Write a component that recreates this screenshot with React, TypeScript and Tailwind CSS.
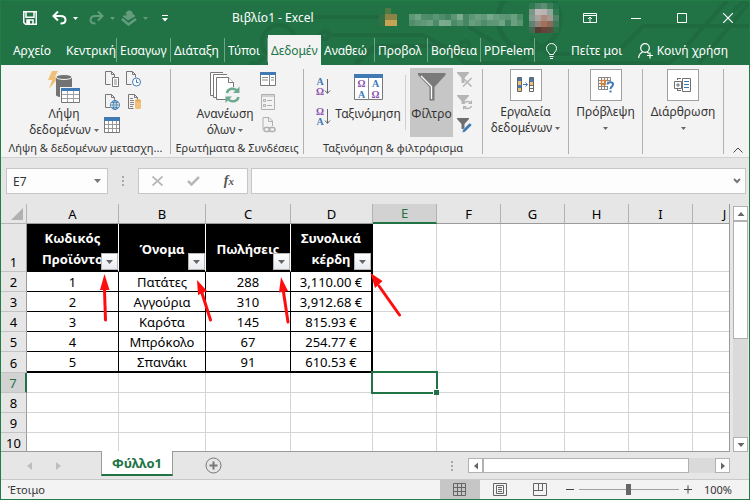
import { useState } from 'react';
import type { ReactNode } from 'react';
import clsx from 'clsx';

type Row = { id: string; name: string; sales: string; profit: string };

const tabs = [
  { label: 'Κεντρική', width: 'w-[54px]' },
  { label: 'Εισαγωγ', width: 'w-[54px]' },
  { label: 'Διάταξη', width: 'w-[54px]' },
  { label: 'Τύποι', width: 'w-[43px]' },
  { label: 'Δεδομέν', width: 'w-[53px]' },
  { label: 'Αναθεώ', width: 'w-[54px]' },
  { label: 'Προβολ', width: 'w-[53px]' },
  { label: 'Βοήθεια', width: 'w-[53px]' },
  { label: 'PDFelem', width: 'w-[54px]' },
];

const columns = [
  { name: 'A', width: 'w-[92px]' },
  { name: 'B', width: 'w-[87px]' },
  { name: 'C', width: 'w-[85px]' },
  { name: 'D', width: 'w-[82px]' },
  { name: 'E', width: 'w-[64px]' },
  { name: 'F', width: 'w-[64px]' },
  { name: 'G', width: 'w-[64px]' },
  { name: 'H', width: 'w-[64px]' },
  { name: 'I', width: 'w-[64px]' },
  { name: 'J', width: 'w-[64px]' },
];

const headings = [
  ['Κωδικός', 'Προϊόντο'],
  ['Όνομα'],
  ['Πωλήσεις'],
  ['Συνολικά', 'κέρδη'],
];

const rows: Row[] = [
  { id: '1', name: 'Πατάτες', sales: '288', profit: '3,110.00 €' },
  { id: '2', name: 'Αγγούρια', sales: '310', profit: '3,912.68 €' },
  { id: '3', name: 'Καρότα', sales: '145', profit: '815.93 €' },
  { id: '4', name: 'Μπρόκολο', sales: '67', profit: '254.77 €' },
  { id: '5', name: 'Σπανάκι', sales: '91', profit: '610.53 €' },
];

const emptyCols = ['E', 'F', 'G', 'H', 'I', 'J'];
const emptyRows = [7, 8, 9, 10];

function Caret({ className = 'text-[#666]' }: { className?: string }) {
  return (
    <svg width="5" height="3" viewBox="0 0 5 3" className={clsx('shrink-0', className)} fill="currentColor">
      <path d="M0 0h5L2.5 3z" />
    </svg>
  );
}

/* ---------- title bar ---------- */

function Circuit() {
  return (
    <svg className="absolute right-0 top-0 pointer-events-none" width="500" height="64" viewBox="0 0 500 64" fill="none" stroke="#1f6a41" strokeWidth="4">
      <circle cx="30" cy="41" r="17" />
      <path d="M20 36h18M46 16h90M0 62h8l8-6M108 62l14-12h22" />
      <circle cx="76" cy="34" r="4" />
      <path d="M80 34h94l28 16h8M106 62l20-17h70l20 17h34" />
      <circle cx="216" cy="44" r="4" />
      <path d="M220 26l30 18M162 16h60" />
      <circle cx="280" cy="18" r="31" strokeWidth="5" />
      <path d="M250 62h22l6-6" />
      <path d="M500 25h-106l-28 28h-66l-18-16M500 2l-50 60M478 0l-50 55-8 7h-170M484 10l16-14" />
    </svg>
  );
}

function BlurredUser() {
  const bar = ['#5e9877', '#6fa386', '#508e6b', '#4b8b67', '#5a9574', '#4f8c6b', '#438460', '#5a9574', '#7cab8f', '#468762', '#5c9675', '#6aa080', '#5f9979', '#79a98c', '#679e7e', '#5e9877', '#5b9574', '#6aa080', '#4c8b68'];
  const face = [
    '#2f7b51', '#4f8568', '#5d8f75', '#3c7f5a', '#23744a',
    '#7b9686', '#bdb9b8', '#b9b3b1', '#8fa79a', '#2f7b51',
    '#7f9c8c', '#aaa1a1', '#b08a78', '#a39a92', '#4f8568',
    '#5d8470', '#94827e', '#a5705a', '#8a6a58', '#3f7a58',
    '#3f6b52', '#563c35', '#644339', '#5c4a40', '#2c7048',
  ];
  return (
    <svg width="182" height="32" viewBox="0 0 182 32" shapeRendering="crispEdges" aria-hidden="true">
      <path d="M7 6h6v6H7z" fill="#4f7a45" />
      <path d="M1 12h6v12H1z" fill="#326f42" />
      <path d="M7 12h12v6H7z" fill="#8c8447" />
      <path d="M7 18h12v6H7z" fill="#c5a455" />
      {bar.map((c, i) => (
        <g key={i}>
          <rect x={31 + i * 6} y="12" width="6" height="6" fill={c} />
          <rect x={31 + i * 6} y="18" width="6" height="6" fill={bar[(i * 5 + 2) % bar.length]} />
        </g>
      ))}
      {face.map((c, i) => (
        <rect key={i} x={151 + (i % 5) * 6} y={1 + Math.floor(i / 5) * 6} width="6" height="6" fill={c} />
      ))}
    </svg>
  );
}

function TitleBar() {
  return (
    <header className="relative flex h-[34px] items-center text-white">
      <div className="flex w-[231px] items-center pl-[22px]">
        <button aria-label="Αποθήκευση">
          <svg width="14" height="14" viewBox="0 0 14 14" fill="none" stroke="#fff" strokeWidth="1.5">
            <path d="M.75.75h12.5v12.5H2.5L.75 11.5z" />
            <path d="M3 1v5.2h8V1M4 13V9h6v4" />
            <path d="M4 9h3v4H4z" fill="#fff" stroke="none" />
          </svg>
        </button>
        <button aria-label="Αναίρεση" className="ml-[15px] flex items-center gap-[6px]">
          <svg width="15" height="14" viewBox="0 0 15 14" fill="none" stroke="#fff" strokeWidth="2">
            <path d="M6 .5L1.500 5 6 9.500M2 5h6.500c3 0 5 1.500 5 4S12 12.500 8.500 12.500" />
          </svg>
          <Caret className="text-white" />
        </button>
        <button aria-label="Επανάληψη" className="ml-[11px] flex items-center gap-[6px] opacity-30">
          <svg width="15" height="14" viewBox="0 0 15 14" fill="none" stroke="#fff" strokeWidth="2">
            <path d="M9 .5L13.500 5 9 9.500M13 5H6.500c-3 0-5 1.500-5 4S3 12.500 6.500 12.500" />
          </svg>
          <Caret className="text-white" />
        </button>
        <button aria-label="Λειτουργία αφής" className="ml-[6px] flex items-center gap-[6px] opacity-30">
          <svg width="16" height="16" viewBox="0 0 16 16" fill="none" stroke="#fff">
            <path d="M2 6l5 4 7-4-3-2v-2l-3-1-2 2v3z" fill="#fff" />
            <path d="M1 9l6.500 5.500L15 9" strokeWidth="2.500" />
            <path d="M5 4c0-4 6-4 6 0" />
          </svg>
          <Caret className="text-white" />
        </button>
        <button aria-label="Προσαρμογή" className="ml-[14px]">
          <svg width="6" height="7" viewBox="0 0 6 7" fill="#fff">
            <path d="M0 0h6v1H0zM0 3h6L3 6.500z" />
          </svg>
        </button>
      </div>
      <h1 className="whitespace-nowrap text-xs">Βιβλίο1 - Excel</h1>
      <div className="ml-auto flex items-center">
        <BlurredUser />
        <button aria-label="Επιλογές κορδέλας" className="ml-[23px]">
          <svg width="14" height="10" viewBox="0 0 14 10" fill="none" stroke="#fff">
            <path d="M.5.5h13v9H.5zM.5 2.500h13M7 9V4.500M5 6l2-2 2 2" />
          </svg>
        </button>
        <button aria-label="Ελαχιστοποίηση" className="ml-[34px]">
          <svg width="10" height="10" viewBox="0 0 10 10" stroke="#fff"><path d="M0 5.500h10" /></svg>
        </button>
        <button aria-label="Μεγιστοποίηση" className="ml-[36px]">
          <svg width="10" height="10" viewBox="0 0 10 10" fill="none" stroke="#fff"><path d="M.5.5h9v9h-9z" /></svg>
        </button>
        <button aria-label="Κλείσιμο" className="ml-[36px] mr-4">
          <svg width="10" height="10" viewBox="0 0 10 10" stroke="#fff" strokeWidth="1.200"><path d="M0 0l10 10M10 0L0 10" /></svg>
        </button>
      </div>
    </header>
  );
}

function TabBar() {
  const [active, setActive] = useState('Δεδομέν');
  return (
    <nav className="relative flex h-[30px] items-stretch text-xs text-white">
      <button className="w-[62px] pt-px text-center">Αρχείο</button>
      {tabs.map((t) => (
        <button
          key={t.label}
          onClick={() => setActive(t.label)}
          className={clsx('flex shrink-0 items-center', t.width, t.label === active && 'bg-[#f3f3f3] text-[#217346]')}
        >
          <span
            className={clsx(
              'flex h-6 w-full items-center border-r pl-[3px] pt-px',
              t.label === active ? 'border-transparent' : 'border-[#6fa587]',
            )}
          >
            <span className="overflow-hidden whitespace-nowrap">{t.label}</span>
          </span>
        </button>
      ))}
      <button className="ml-[11px] flex items-center gap-[14px] whitespace-nowrap pt-px">
        <svg width="11" height="16" viewBox="0 0 11 16" fill="none" stroke="#fff">
          <path d="M3.500 11.500c0-2-3-3-3-6a5 5 0 0110 0c0 3-3 4-3 6zM3.500 13.500h4M4 15.500h3" />
        </svg>
        Πείτε μοι
      </button>
      <button className="ml-auto mr-[21px] flex items-center gap-[3px] whitespace-nowrap pt-px">
        <svg width="16" height="16" viewBox="0 0 16 16" fill="none" stroke="#fff" strokeWidth="1.200">
          <circle cx="7" cy="5" r="4.300" />
          <path d="M.6 15c.3-3 1.800-5 4-6M9 9l2 1.500M12 9.500v6M9 12.500h6" />
        </svg>
        Κοινή χρήση
      </button>
    </nav>
  );
}

/* ---------- ribbon icons ---------- */

function Small({ children, label }: { children: ReactNode; label: string }) {
  return (
    <button aria-label={label} className="block">
      <svg width="16" height="16" viewBox="0 0 16 16" fill="none">{children}</svg>
    </button>
  );
}

const page = <path d="M1.500.5h6l3 3v3M7.500.5v3h3M1.500.5v13h5" stroke="#777" fill="none" />;

function GetDataIcon() {
  return (
    <svg width="32" height="32" viewBox="0 0 32 32">
      <path d="M4 0h6L7 6h4L1 18l3-9H0z" fill="#eec07a" />
      <path d="M8 7v17c0 3 16 3 16 0V7z" fill="#737373" />
      <ellipse cx="16" cy="6" rx="8" ry="2.500" fill="#737373" stroke="#f3f3f3" />
      <path d="M12 16h20v16H12z" fill="#f3f3f3" />
      <path d="M13.500 17.500h18v14h-18z" fill="#fff" stroke="#777" />
      <path d="M13 17h19v3H13z" fill="#4179b5" />
      <path d="M19.500 20v11M25.500 20v11M14 23.500h17M14 27.500h17" stroke="#a0a0a0" />
    </svg>
  );
}

function RefreshAllIcon() {
  return (
    <svg width="32" height="32" viewBox="0 0 32 32" fill="#fff" stroke="#777">
      <path d="M14 1.500H1.500v23H4M18 3.500H4.500v23H7" />
      <path d="M7.500 6.500h12l5 5v17h-17z" />
      <path d="M19.500 6.500v5h5" />
      <circle cx="23.500" cy="24" r="8" fill="#f3f3f3" stroke="none" />
      <path d="M18 22c1-4.500 7-6 10.500-2M29.500 26c-1 4.500-7 6-10.500 2" fill="none" stroke="#6fab90" strokeWidth="2.500" />
      <path d="M30.500 15.500v6.500h-6.500zM16.500 32v-6.500H23z" fill="#6fab90" stroke="none" />
    </svg>
  );
}

function SortIcon() {
  return (
    <svg width="29" height="26" viewBox="0 0 29 26" fontFamily="Liberation Serif, serif" fontSize="10" fontWeight="bold" textAnchor="middle">
      <path d="M.5.5h28v25H.5z" fill="#fff" stroke="#777" />
      <path d="M0 0h29v4H0z" fill="#4179b5" />
      <path d="M14.500 4v22" stroke="#888" />
      <text x="7.500" y="13" fill="#8a4fb0">Ω</text>
      <text x="21.500" y="13" fill="#4179b5">Α</text>
      <text x="7.500" y="24" fill="#4179b5">Α</text>
      <text x="21.500" y="24" fill="#8a4fb0">Ω</text>
    </svg>
  );
}

function SortOrder({ desc = false }: { desc?: boolean }) {
  return (
    <button aria-label={desc ? 'Φθίνουσα ταξινόμηση' : 'Αύξουσα ταξινόμηση'} className="block">
      <svg width="15" height="18" viewBox="0 0 15 18" fontFamily="Liberation Serif, serif" fontSize="10" fontWeight="bold" textAnchor="middle">
        <text x="4" y="7" fill={desc ? '#8a4fb0' : '#4179b5'}>{desc ? 'Ω' : 'Α'}</text>
        <text x="4" y="17" fill={desc ? '#4179b5' : '#8a4fb0'}>{desc ? 'Α' : 'Ω'}</text>
        <path d="M11.500 1v14M9 12.500l2.500 3 2.500-3" fill="none" stroke="#666" />
      </svg>
    </button>
  );
}

function FilterIcon() {
  return (
    <svg width="28" height="28" viewBox="0 0 28 28">
      <path d="M0 0h27.500v2L16.500 14v13.500h-5V14L0 2z" fill="#7a7a7a" />
      <path d="M3 3l10.500 10.500v12.500" fill="none" stroke="#fff" strokeWidth="1.300" />
    </svg>
  );
}

function ToolsIcon() {
  return (
    <svg width="18" height="16" viewBox="0 0 18 16">
      <path d="M.5.5h4v14h-4z" fill="#eec07a" stroke="#666" />
      <path d="M1 1h3v3H1zM1 8h3v3H1z" fill="#4179b5" />
      <path d="M6 7.500h4.500M8.500 5.500l2 2-2 2" stroke="#4179b5" fill="none" />
      <path d="M12.500.5h4v14h-4z" fill="#fff" stroke="#666" />
      <path d="M13 1h3v4h-3z" fill="#4179b5" />
      <path d="M13 5h3v3h-3z" fill="#eec07a" />
      <path d="M12 8.500h5M12 11.500h5" stroke="#666" />
    </svg>
  );
}

function ForecastIcon() {
  return (
    <svg width="18" height="16" viewBox="0 0 18 16" fill="none">
      <path d="M1.500.5h12v12h-12zM4.500.5v12M7.500.5v12M10.500.5v12M1.500 3.500h12M1.500 6.500h12M1.500 9.500h12" stroke="#888" />
      <path d="M4.500 3.500h4v4h-4z" stroke="#e0802f" strokeWidth="1.500" />
      <path d="M9 4.500h8V16h-6V9H9z" fill="#fff" />
      <path d="M10.500 7.500c.3-3 5.500-3 5.500 0 0 2-2.500 2-2.500 4.500" stroke="#4179b5" strokeWidth="2" />
      <path d="M12.500 13.500h2v2h-2z" fill="#4179b5" />
    </svg>
  );
}

function OutlineIcon() {
  return (
    <svg width="18" height="16" viewBox="0 0 18 16" fill="none" stroke="#707070">
      <path d="M3 1.500h4M3 13.500h4M3.500 1v2M3.500 12v2" />
      <path d="M.5 4.500h7v7h-7zM2 8h4M4 6v4" />
      <path d="M8.500 1.500h8v13h-8z" />
      <path d="M10 4.500h5M10 7.500h5M10 10.500h5" stroke="#4179b5" />
    </svg>
  );
}

/* ---------- ribbon ---------- */

function Group({ children, label, className }: { children: ReactNode; label?: string; className: string }) {
  return (
    <section className={clsx('flex h-[85px] shrink-0 flex-col border-r border-[#b1b1b1]', className)}>
      <div className="flex h-[74px] items-start">{children}</div>
      {label && <p className="whitespace-nowrap text-center text-[11px] leading-3">{label}</p>}
    </section>
  );
}

function Boxed({ children, lines }: { children: ReactNode; lines: string[] }) {
  return (
    <button className="flex w-full flex-col items-center leading-4">
      <span className="mb-[3px] flex h-8 w-8 items-center justify-center border border-[#a0a0a0] bg-white">{children}</span>
      {lines[0]}
      <span className="flex h-4 items-center gap-[3px]">
        {lines[1]}
        <Caret />
      </span>
    </button>
  );
}

function Ribbon() {
  return (
    <div className="flex h-[93px] border-b border-[#d0d0d0] bg-[#f3f3f3] pt-1 text-xs text-[#333]">
      <Group label="Λήψη & δεδομένων μετασχη..." className="w-[170px]">
        <button className="ml-[27px] mt-[2px] flex w-[72px] flex-col items-center leading-4">
          <span className="mb-[3px]"><GetDataIcon /></span>
          Λήψη
          <span className="flex items-center gap-[3px] whitespace-nowrap">δεδομένων <Caret /></span>
        </button>
        <div className="ml-1 mt-[2px] grid grid-cols-2 gap-x-[5px] gap-y-[7px]">
          <Small label="Από κείμενο">
            {page}
            <path d="M8.500 6.500h6v9h-6z" fill="#fff" stroke="#777" />
            <path d="M10 9h3M10 11h3M10 13h3" stroke="#888" />
          </Small>
          <Small label="Πρόσφατες προελεύσεις">
            {page}
            <circle cx="11.500" cy="11" r="4" fill="#fff" stroke="#4179b5" />
            <path d="M11.500 8.500v3h2" stroke="#4179b5" />
          </Small>
          <Small label="Από το web">
            {page}
            <circle cx="11" cy="11" r="4.500" fill="#fff" stroke="#4179b5" />
            <path d="M6.500 11h9M11 6.500v9M8 8.500h6M8 13.500h6" stroke="#6f9fb0" />
            <ellipse cx="11" cy="11" rx="2" ry="4.500" stroke="#4179b5" />
          </Small>
          <Small label="Υπάρχουσες συνδέσεις">
            <path d="M3.500.5h6l3 3v2M9.500.5v3h3M3.500.5v14h5" stroke="#777" />
            <path d="M5 4.500h3M5 6.500h4M5 8.500h4M5 10.500h4M5 12.500h3" stroke="#888" />
            <path d="M10 7v7c0 1.500 6 1.500 6 0V7z" fill="#eec07a" />
            <ellipse cx="13" cy="6.500" rx="3" ry="1.300" fill="#e3ab55" />
          </Small>
          <Small label="Από πίνακα">
            <path d="M.5.5h15v15H.5z" fill="#fff" stroke="#777" />
            <path d="M0 0h16v4H0z" fill="#4179b5" />
            <path d="M4.500 4v11M8.500 4v11M12.500 4v11M1 7.500h14M1 11.500h14" stroke="#999" />
          </Small>
        </div>
      </Group>

      <Group label="Ερωτήματα & Συνδέσεις" className="w-[133px]">
        <button className="ml-[22px] mt-[2px] flex w-[64px] flex-col items-center leading-4">
          <span className="mb-[3px]"><RefreshAllIcon /></span>
          Ανανέωση
          <span className="flex items-center gap-[3px]">όλων <Caret /></span>
        </button>
        <div className="ml-[3px] mt-[2px] flex flex-col gap-[7px]">
          <Small label="Ερωτήματα">
            <path d="M.5 1.500h15v13H.5z" fill="#fff" stroke="#777" />
            <path d="M0 1h16v3H0z" fill="#4179b5" />
            <path d="M9.500 4v10M2 6.500h6M2 9h6M11 6.500h3M11 9h3" stroke="#888" />
          </Small>
          <Small label="Ιδιότητες">
            <path d="M1.500.5h13v15h-13z" stroke="#b0b0b0" />
            <path d="M1 2h14M7 6.500h5M7 11.500h5" stroke="#b0b0b0" />
            <path d="M3.500 5.500h2v2h-2zM3.500 10.500h2v2h-2z" stroke="#b0b0b0" />
          </Small>
          <Small label="Επεξεργασία συνδέσεων">
            <path d="M3 12.500V.5h6l3.500 3.500v5M8.500.5v4h4" stroke="#b0b0b0" />
            <rect x="4" y="10.500" width="6" height="4" rx="2" stroke="#b0b0b0" strokeWidth="1.500" />
            <rect x="9" y="10.500" width="6" height="4" rx="2" stroke="#b0b0b0" strokeWidth="1.500" />
          </Small>
        </div>
      </Group>

      <Group label="Ταξινόμηση & φιλτράρισμα" className="w-[179px]">
        <div className="ml-[12px] mt-[9px] flex flex-col gap-3">
          <SortOrder />
          <SortOrder desc />
        </div>
        <button className="ml-[4px] mt-[5px] flex w-[66px] flex-col items-center leading-4">
          <span className="mb-[6px]"><SortIcon /></span>
          Ταξινόμηση
        </button>
        <div className="ml-[4px] mt-[6px] h-[55px] border-r border-[#cfcfcf]" />
        <button className="-mt-px ml-1 flex h-[69px] w-[43px] flex-col items-center bg-[#c6c6c6] pt-[5px] leading-4">
          <span className="mb-[5px]"><FilterIcon /></span>
          Φίλτρο
        </button>
        <div className="ml-1 mt-[2px] flex flex-col gap-[7px]">
          <Small label="Απαλοιφή">
            <path d="M0 1h12v1L7.500 7v5h-3V7L0 2z" fill="#b5b5b5" />
            <path d="M6 7l8.500 8.500M14.500 7L6 15.500" stroke="#b5b5b5" strokeWidth="1.500" />
          </Small>
          <Small label="Εφαρμογή ξανά">
            <path d="M0 1h12v1L7.500 7v3h-3V7L0 2z" fill="#b5b5b5" />
            <path d="M6.500 10c1-3 5.500-3.500 7.500-1M14.500 12c-1 3-5.500 3.500-7.500 1" stroke="#b5b5b5" strokeWidth="1.500" />
            <path d="M15 6v4h-4zM6 16v-4h4z" fill="#b5b5b5" />
          </Small>
          <Small label="Για προχωρημένους">
            <path d="M0 1h12v1L7.500 7v5h-3V7L0 2z" fill="#6e6e6e" />
            <path d="M5 15.500l1-3 6.500-6.500 2.500 2-7 7z" fill="#4179b5" stroke="#f3f3f3" strokeWidth=".5" />
          </Small>
        </div>
      </Group>

      <Group className="w-[86px]">
        <Boxed lines={['Εργαλεία', 'δεδομένων']}><ToolsIcon /></Boxed>
      </Group>
      <Group className="w-[74px]">
        <Boxed lines={['Πρόβλεψη', '']}><ForecastIcon /></Boxed>
      </Group>
      <Group className="w-[81px]">
        <Boxed lines={['Διάρθρωση', '']}><OutlineIcon /></Boxed>
      </Group>
      <button aria-label="Σύμπτυξη κορδέλας" className="mb-1 ml-auto mr-[6px] self-end">
        <svg width="10" height="6" viewBox="0 0 10 6" fill="none" stroke="#444"><path d="M.5 5.500L5 1l4.500 4.500" /></svg>
      </button>
    </div>
  );
}

/* ---------- formula bar ---------- */

function Dots() {
  return (
    <svg width="2" height="10" viewBox="0 0 2 10" fill="#a8a8a8"><path d="M0 0h2v2H0zM0 4h2v2H0zM0 8h2v2H0z" /></svg>
  );
}

function FormulaBar() {
  return (
    <div className="flex h-[46px] items-start pl-[5px] pr-[3px] pt-[10px] text-xs text-[#333]">
      <div className="flex h-[26px] w-[102px] items-center border border-[#c6c6c6] bg-[#fdfdfd] pr-[6px]">
        <input aria-label="Πλαίσιο ονόματος" defaultValue="E7" className="w-full min-w-0 bg-transparent pl-[6px] pt-px outline-none" />
        <svg width="7" height="4" viewBox="0 0 7 4" fill="#777" className="shrink-0"><path d="M0 0h7L3.500 4z" /></svg>
      </div>
      <div className="flex h-[26px] w-[30px] items-center justify-center"><Dots /></div>
      <div className="flex h-[26px] w-[110px] items-center justify-between border border-[#c6c6c6] bg-[#fdfdfd] px-[13px]">
        <button aria-label="Άκυρο">
          <svg width="11" height="10" viewBox="0 0 11 10" stroke="#b8b8b8" strokeWidth="1.800"><path d="M.5.5l10 9M10.500.5l-10 9" /></svg>
        </button>
        <button aria-label="Εισαγωγή">
          <svg width="13" height="10" viewBox="0 0 13 10" fill="none" stroke="#b8b8b8" strokeWidth="2.500"><path d="M1 5L4.500 8.500 12 1" /></svg>
        </button>
        <button aria-label="Εισαγωγή συνάρτησης" className="font-['Liberation_Serif',serif] text-sm font-bold italic leading-4 text-[#555]">
          f<span className="text-[11px]">x</span>
        </button>
      </div>
      <div className="ml-[3px] flex h-[26px] flex-1 items-center border border-[#c6c6c6] bg-[#fdfdfd] pr-1">
        <input aria-label="Γραμμή τύπων" className="w-full min-w-0 bg-transparent pl-1 outline-none" />
        <svg width="8" height="6" viewBox="0 0 8 6" fill="none" stroke="#777" strokeWidth="2" className="shrink-0"><path d="M1 1l3 3 3-3" /></svg>
      </div>
    </div>
  );
}

/* ---------- sheet ---------- */

function RowHead({ n, active = false }: { n: number; active?: boolean }) {
  return (
    <th
      scope="row"
      className={clsx(
        'border-b border-b-[#c3c3c3] p-0 align-bottom text-[13px] font-normal leading-[18px]',
        active ? 'border-r-2 border-r-[#217346] bg-[#d2d2d2] text-[#217346]' : 'border-r border-r-[#9b9b9b] bg-[#e6e6e6]',
      )}
    >
      {n}
    </th>
  );
}

function Cell({ children, last = false, edge = false }: { children: ReactNode; last?: boolean; edge?: boolean }) {
  return (
    <td
      className={clsx(
        'border-black p-0 text-center leading-[18px]',
        last ? 'border-b-2' : 'border-b',
        edge ? 'border-r-2' : 'border-r',
      )}
    >
      {children}
    </td>
  );
}

function Blank({ selected = false }: { selected?: boolean }) {
  return (
    <td className="relative border-b border-r border-[#d4d4d4] p-0">
      {selected && (
        <div className="absolute -bottom-0.5 -left-0.5 -right-0.5 -top-0.5 z-10 border-2 border-[#217346]">
          <span className="absolute -bottom-[3px] -right-[3px] h-[6px] w-[6px] border-l border-t border-white bg-[#217346]" />
        </div>
      )}
    </td>
  );
}

function Arrows() {
  const arrows = [
    'M105.500 320L104.500 290',
    'M210.500 320L201 290',
    'M288 322L283.500 292',
    'M399.500 315L379 286',
  ];
  return (
    <svg className="pointer-events-none absolute left-0 top-0 z-20" width="420" height="140" viewBox="1 204 420 140">
      {arrows.map((d) => (
        <path key={d} d={d} stroke="#fd0d0d" strokeWidth="3" strokeLinecap="round" />
      ))}
      <path fill="#fd0d0d" d="M104.500 274l5 16h-9.500zM197 280l10 11-9 4zM281 277l7 14-9 1.500zM370.500 273l12 8-7.500 7z" />
    </svg>
  );
}

function Sheet() {
  return (
    <div className="relative min-w-0 flex-1 overflow-hidden border-b border-r border-[#9b9b9b]">
      <table className="w-[736px] table-fixed border-separate border-spacing-0 bg-white text-[13px] text-black">
        <thead>
          <tr className="h-5 bg-[#e6e6e6]">
            <th className="w-[26px] border-b border-r border-[#b5b5b5] p-0">
              <svg width="12" height="12" viewBox="0 0 12 12" className="ml-auto mr-[3px]" fill="#b1b1b1"><path d="M12 0v12H0z" /></svg>
            </th>
            {columns.map((c) => (
              <th
                key={c.name}
                scope="col"
                className={clsx(
                  'border-r border-r-[#b1b1b1] p-0 font-normal leading-[18px]',
                  c.width,
                  c.name === 'E'
                    ? 'border-b-2 border-b-[#217346] bg-[#d2d2d2] text-[#217346]'
                    : 'border-b border-b-[#9b9b9b]',
                )}
              >
                {c.name}
              </th>
            ))}
          </tr>
        </thead>
        <tbody>
          <tr className="h-12">
            <RowHead n={1} />
            {headings.map((lines, i) => (
              <th key={lines[0]} className={clsx('relative border-b border-b-black bg-black px-0 pb-0 pt-[3px] leading-[21px] text-white', i < 3 ? 'border-r border-r-white' : 'border-r-2 border-r-black')}>
                {lines.map((l) => <span key={l} className="block">{l}</span>)}
                <button aria-label={`Φίλτρο ${lines[0]}`} className="absolute bottom-px right-0 flex h-[17px] w-[17px] items-center justify-center border border-[#b5b5b5] bg-linear-to-b from-white to-[#e8ebf0]">
                  <svg width="7" height="4" viewBox="0 0 7 4" fill="#666"><path d="M0 0h7L3.500 4z" /></svg>
                </button>
              </th>
            ))}
            {emptyCols.map((c) => <Blank key={c} />)}
          </tr>
          {rows.map((r, i) => {
            const last = i === rows.length - 1;
            return (
              <tr key={r.id} className={last ? 'h-[21px]' : 'h-5'}>
                <RowHead n={i + 2} />
                <Cell last={last}>{r.id}</Cell>
                <Cell last={last}>{r.name}</Cell>
                <Cell last={last}>{r.sales}</Cell>
                <Cell last={last} edge>{r.profit}</Cell>
                {emptyCols.map((c) => <Blank key={c} />)}
              </tr>
            );
          })}
          {emptyRows.map((n) => (
            <tr key={n} className="h-5">
              <RowHead n={n} active={n === 7} />
              {columns.map((c) => <Blank key={c.name} selected={n === 7 && c.name === 'E'} />)}
            </tr>
          ))}
        </tbody>
      </table>
      <Arrows />
    </div>
  );
}

function ScrollButton({ d, label, className }: { d: string; label: string; className?: string }) {
  return (
    <button aria-label={label} className={clsx('flex h-[15px] w-[15px] shrink-0 items-center justify-center border border-[#b1b1b1] bg-white', className)}>
      <svg width="8" height="8" viewBox="0 0 8 8" fill="#666"><path d={d} /></svg>
    </button>
  );
}

function VerticalScroll() {
  return (
    <div className="ml-[3px] mr-px mt-[2px] flex w-[15px] flex-col bg-[#dadada]">
      <ScrollButton label="Πάνω" d="M.5 6L4 2l3.500 4z" />
      <div className="h-[118px] border border-[#b1b1b1] bg-white" />
      <ScrollButton label="Κάτω" d="M.5 2L4 6l3.500-4z" className="mt-auto" />
    </div>
  );
}

function SheetBar() {
  return (
    <div className="flex h-[27px] shrink-0 pr-[19px]">
      <div className="flex w-[100px] items-center gap-[24px] pl-[26px]">
        <svg width="5" height="8" viewBox="0 0 5 8" fill="#bdbdbd"><path d="M5 0v8L0 4z" /></svg>
        <svg width="5" height="8" viewBox="0 0 5 8" fill="#bdbdbd"><path d="M0 0v8l5-4z" /></svg>
      </div>
      <button className="relative -mt-px h-[25px] w-[72px] border-x border-b-2 border-x-[#9b9b9b] border-b-[#217346] bg-white pt-px text-[13px] font-bold leading-[22px] text-[#217346]">
        Φύλλο1
      </button>
      <button aria-label="Νέο φύλλο" className="ml-8">
        <svg width="17" height="17" viewBox="0 0 17 17" fill="none" stroke="#777">
          <circle cx="8.500" cy="8.500" r="7.500" />
          <path d="M8.500 4.500v8M4.500 8.500h8" strokeWidth="2" />
        </svg>
      </button>
      <div className="ml-auto flex items-center">
        <Dots />
        <div className="ml-[15px] flex w-[262px] bg-[#dadada]">
          <ScrollButton label="Αριστερά" d="M6 .5L2 4l4 3.500z" />
          <div className="h-[15px] w-[206px] border border-[#b1b1b1] bg-white" />
          <ScrollButton label="Δεξιά" d="M2 .5L6 4 2 7.500z" className="ml-auto" />
        </div>
      </div>
    </div>
  );
}

function StatusBar() {
  return (
    <footer className="flex h-5 shrink-0 items-stretch border-t border-[#c8c8c8] bg-[#f3f3f3] pr-[17px] text-[11px] text-[#333]">
      <span className="self-center pl-[7px] pt-px">Έτοιμο</span>
      <button aria-label="Κανονική" className="ml-auto flex w-10 items-center justify-center bg-[#c6c6c6]">
        <svg width="13" height="13" viewBox="0 0 13 13" fill="none" stroke="#666"><path d="M.5.5h12v12H.5zM4.500 0v13M8.500 0v13M0 4.500h13M0 8.500h13" /></svg>
      </button>
      <button aria-label="Διάταξη σελίδας" className="flex w-10 items-center justify-center">
        <svg width="14" height="13" viewBox="0 0 14 13" fill="none" stroke="#666"><path d="M.5.5h13v12H.5zM3.500 2.500h7v8h-7zM5 4.500h4M5 6.500h4M5 8.500h4" /></svg>
      </button>
      <button aria-label="Αλλαγές σελίδας" className="flex w-10 items-center justify-center">
        <svg width="14" height="13" viewBox="0 0 14 13" fill="none" stroke="#666"><path d="M.5.5h13v12H.5zM5.500 1v7M.5 7.500h9M9.500 1v7" /></svg>
      </button>
      <button aria-label="Σμίκρυνση" className="ml-[6px] flex items-center">
        <svg width="8" height="9" viewBox="0 0 8 9" stroke="#444"><path d="M0 4.500h8" /></svg>
      </button>
      <input
        type="range"
        aria-label="Ζουμ"
        min="0"
        max="200"
        defaultValue="100"
        className="mx-[5px] h-px w-[100px] appearance-none self-center bg-[#a0a0a0] [&::-webkit-slider-thumb]:h-[11px] [&::-webkit-slider-thumb]:w-[5px] [&::-webkit-slider-thumb]:appearance-none [&::-webkit-slider-thumb]:bg-[#666]"
      />
      <button aria-label="Μεγέθυνση" className="flex items-center">
        <svg width="8" height="9" viewBox="0 0 8 9" stroke="#444"><path d="M0 4.500h8M4 .5v8" /></svg>
      </button>
      <span className="ml-3 self-center pt-px">100%</span>
    </footer>
  );
}

export default function App() {
  return (
    <div className="flex h-screen flex-col overflow-hidden border border-[#217c46] bg-[#e6e6e6] font-['Noto_Sans','Open_Sans',sans-serif]">
      <div className="relative bg-[#217346]">
        <Circuit />
        <TitleBar />
        <TabBar />
      </div>
      <Ribbon />
      <FormulaBar />
      <main className="flex min-h-0 flex-1">
        <Sheet />
        <VerticalScroll />
      </main>
      <SheetBar />
      <StatusBar />
    </div>
  );
}
